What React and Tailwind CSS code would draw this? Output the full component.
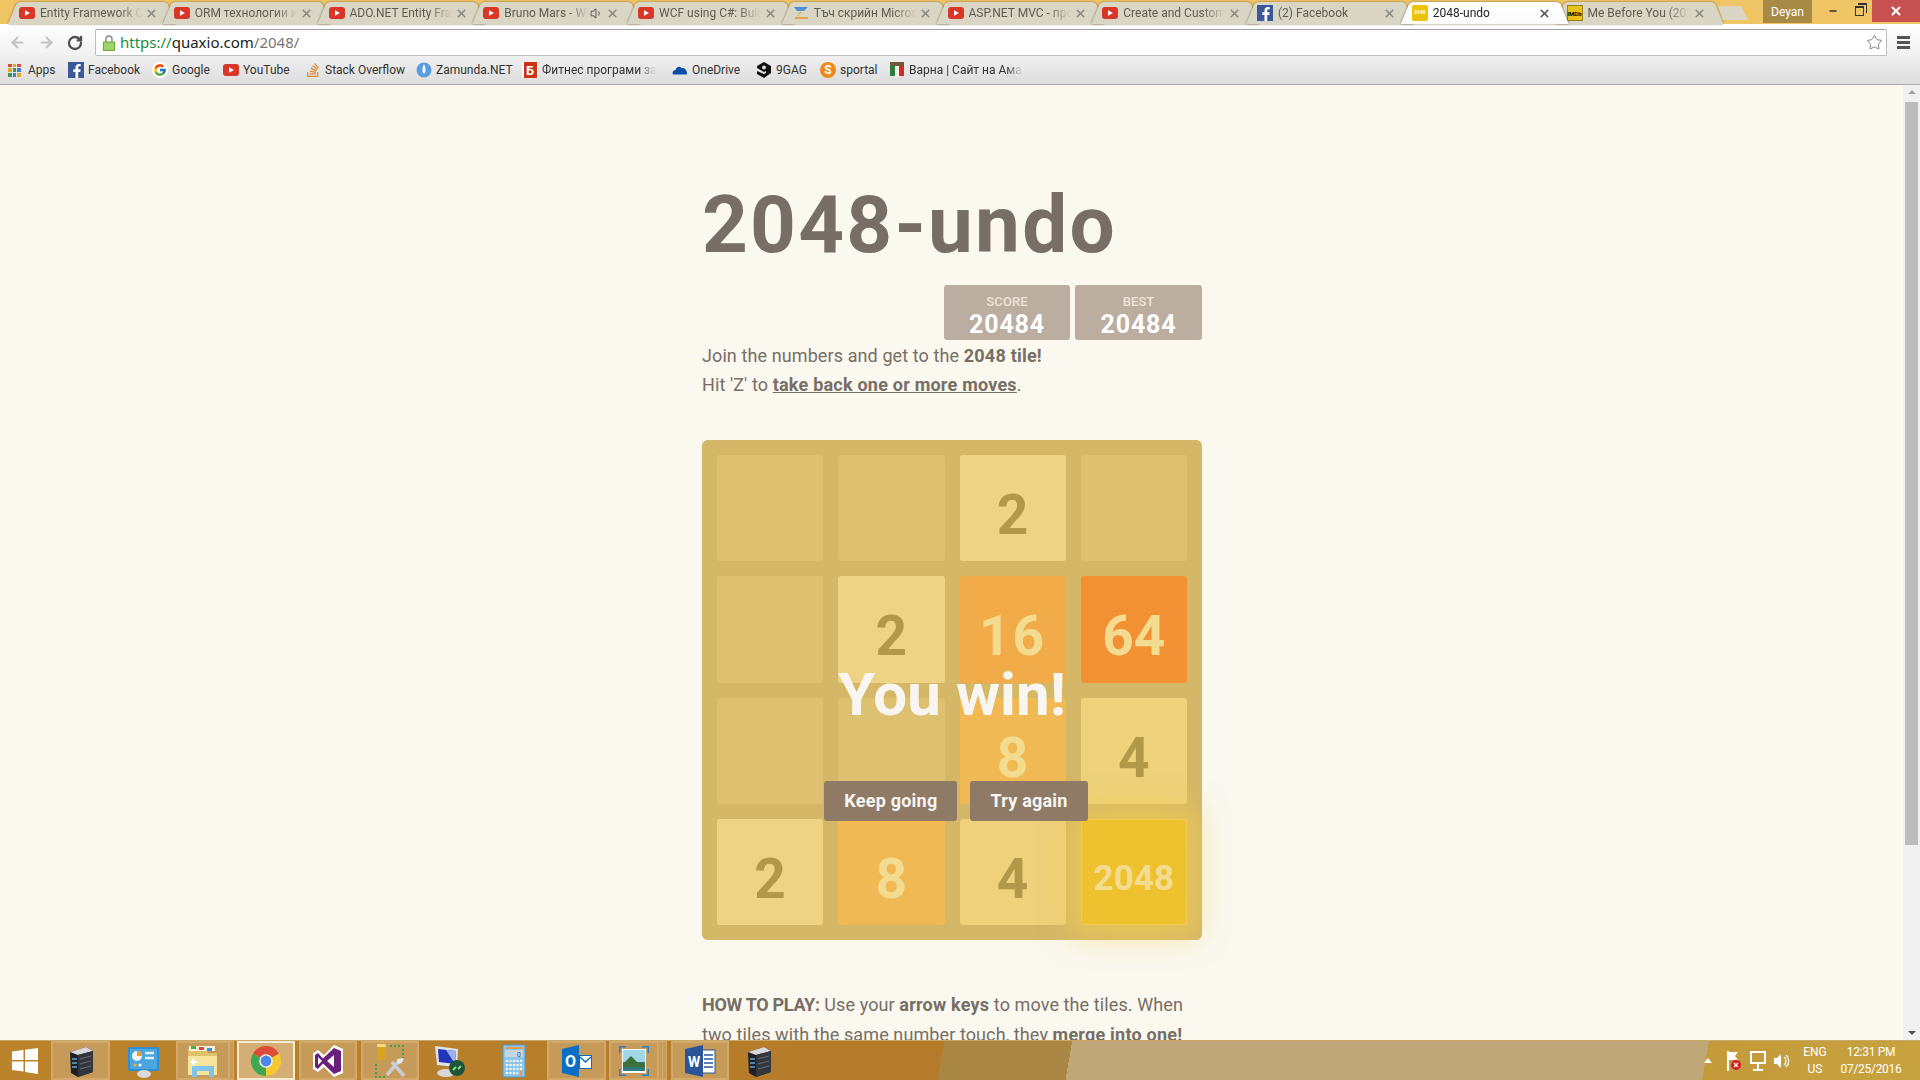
import React from "react";
import { ArrowLeft, ArrowRight, RotateCw, Star, X, Volume1, Minus } from "lucide-react";
import { FaFacebookF, FaStackOverflow } from "react-icons/fa";
import { FcGoogle } from "react-icons/fc";

const YouTube = () => (
  <svg width="16" height="16" viewBox="0 0 16 16" className="flex-none">
    <rect x="0" y="2" width="16" height="12" rx="3" fill="#d9362a" />
    <path d="M6 5.2 L11 8 L6 10.8 Z" fill="#fff" />
  </svg>
);

const Facebook = () => (
  <span className="flex h-4 w-4 flex-none items-end justify-end bg-[#3b5998] text-white">
    <FaFacebookF size={14} />
  </span>
);

const Fav2048 = () => (
  <span className="flex h-4 w-4 flex-none items-center justify-center rounded-[2px] bg-[#edc200] text-[5px] font-bold text-white">
    2048
  </span>
);

const Imdb = () => (
  <span className="flex h-4 w-4 flex-none items-center justify-center border border-[#9a7d10] bg-[#e8c21a] text-[6px] font-bold text-black">
    IMDb
  </span>
);

const Zlogo = () => (
  <svg width="16" height="16" viewBox="0 0 16 16" className="flex-none">
    <path d="M1 2 H15 L11 6 H4 Z" fill="#4b8fd6" />
    <path d="M9 7 L3 12 H15 V14 H1 L7 7 Z" fill="#e8a04a" />
  </svg>
);

const tabs = [
  { icon: <YouTube />, label: "Entity Framework Code First" },
  { icon: <YouTube />, label: "ORM технологии и Entity" },
  { icon: <YouTube />, label: "ADO.NET Entity Framework" },
  { icon: <YouTube />, label: "Bruno Mars - When I Was", sound: true },
  { icon: <YouTube />, label: "WCF using C#: Building" },
  { icon: <Zlogo />, label: "Тъч скрийн Microsoft Surface" },
  { icon: <YouTube />, label: "ASP.NET MVC - проект" },
  { icon: <YouTube />, label: "Create and Customize" },
  { icon: <Facebook />, label: "(2) Facebook" },
  { icon: <Fav2048 />, label: "2048-undo", active: true },
  { icon: <Imdb />, label: "Me Before You (2016)" },
];

const Tab = ({ icon, label, sound, active }) => (
  <div className={`relative -mr-[13.25px] h-[22px] w-[168px] flex-none drop-shadow-[0_0_1px_rgba(90,70,30,0.7)] ${active ? "z-10" : ""}`}>
    <div
      className={`flex h-full items-center pl-[11px] [clip-path:polygon(0_100%,5%_8%,7%_0,93%_0,95%_8%,100%_100%)] ${
        active ? "bg-gradient-to-b from-[#ffffff] to-[#fbfbfb]" : "bg-[#dad6c6]"
      }`}
    >
      {icon}
      <span
        className={`ml-[5px] overflow-hidden whitespace-nowrap text-[12px] [mask-image:linear-gradient(to_right,black_78%,transparent)] ${
          sound ? "w-[84px]" : "w-[102px]"
        } ${active ? "text-[#222]" : "text-[#5f5b50]"}`}
      >
        {label}
      </span>
      {sound && <Volume1 size={13} className="ml-[2px] text-[#666]" />}
      <X size={13} strokeWidth={3} className={`ml-[3px] flex-none ${active ? "text-[#555]" : "text-[#8a8a84]"}`} />
    </div>
  </div>
);

const AppsIcon = () => (
  <span className="mr-[3px] grid h-[13px] w-[13px] flex-none grid-cols-3 gap-px">
    {["#e24a3b", "#e8a52d", "#e24a3b", "#e8a52d", "#3f9b4b", "#3f7fdc", "#3f9b4b", "#3f7fdc", "#e8a52d"].map((c, i) => (
      <span key={i} style={{ background: c }} />
    ))}
  </span>
);

const bookmarks = [
  { icon: <AppsIcon />, label: "Apps", w: "w-[60px]" },
  { icon: <Facebook />, label: "Facebook", w: "w-[84px]" },
  { icon: <span className="flex h-4 w-4 flex-none items-center justify-center rounded-full bg-white"><FcGoogle size={14} /></span>, label: "Google", w: "w-[71px]" },
  { icon: <YouTube />, label: "YouTube", w: "w-[82px]" },
  { icon: <FaStackOverflow size={16} className="flex-none text-[#e08a35]" />, label: "Stack Overflow", w: "w-[111px]" },
  {
    icon: (
      <svg width="16" height="16" viewBox="0 0 16 16" className="flex-none">
        <circle cx="8" cy="8" r="7.5" fill="#5b9be0" />
        <path d="M8 2 C10 6 10 10 8 12 C6 10 6 6 8 2 Z" fill="#fff" />
      </svg>
    ),
    label: "Zamunda.NET",
    w: "w-[106px]",
  },
  {
    icon: (
      <span className="flex h-4 w-4 flex-none items-center justify-center bg-white">
        <span className="flex h-4 w-[13px] items-center justify-center bg-[#cc3311] text-[13px] font-bold leading-none text-white">Б</span>
      </span>
    ),
    label: "Фитнес програми за",
    fade: true,
    w: "w-[150px]",
  },
  {
    icon: (
      <svg width="16" height="16" viewBox="0 0 18 16" className="flex-none">
        <path d="M1 13 C0 10 2 8 4 8 C5 4 9 3 11 6 C14 5 17 8 17 13 Z" fill="#0b4fa8" />
      </svg>
    ),
    label: "OneDrive",
    w: "w-[84px]",
  },
  {
    icon: (
      <svg width="16" height="16" viewBox="0 0 16 16" className="flex-none">
        <path d="M8 0 L15 4 V11 L8 16 L1 12 V9 L8 12 L10 11 V9 L8 10 L1 6 V4 Z" fill="#111" />
        <circle cx="8" cy="5.5" r="2" fill="#ddd" />
      </svg>
    ),
    label: "9GAG",
    w: "w-[64px]",
  },
  {
    icon: (
      <span className="flex h-4 w-4 flex-none items-center justify-center rounded-full bg-[#ef8a1c] text-[12px] font-bold leading-none text-white">S</span>
    ),
    label: "sportal",
    w: "w-[69px]",
  },
  {
    icon: (
      <svg width="16" height="16" viewBox="0 0 16 16" className="flex-none">
        <rect x="1" y="0" width="14" height="4" fill="#6b5b3a" />
        <rect x="1" y="4" width="5" height="10" fill="#2c7a3d" />
        <rect x="6" y="4" width="4" height="11" fill="#f4f1e6" />
        <rect x="10" y="4" width="5" height="10" fill="#c9302c" />
      </svg>
    ),
    label: "Варна | Сайт на Аматьори",
    fade: true,
    w: "w-[140px]",
  },
];

const ServerIcon = () => (
  <svg width="30" height="34" viewBox="0 0 30 34">
    <path d="M4 8 L20 3 L27 7 L27 28 L12 33 L5 29 Z" fill="#1f2126" />
    <path d="M4 8 L20 3 L27 7 L12 11 Z" fill="#d8d8d8" />
    <path d="M12 11 L27 7 V28 L12 33 Z" fill="#33363c" />
    <path d="M6 15 H11 M6 19 H11 M6 23 H11" stroke="#5fa8d8" strokeWidth="1.3" />
    <path d="M14 15 L25 12 M14 20 L25 17 M14 25 L25 22" stroke="#6a6e76" strokeWidth="1" />
  </svg>
);

const ControlIcon = () => (
  <svg width="34" height="34" viewBox="0 0 34 34">
    <rect x="2" y="3" width="31" height="24" rx="2" fill="#2f8fd0" />
    <rect x="4" y="5" width="27" height="20" fill="#4aa6e0" />
    <circle cx="11" cy="12" r="5" fill="#f3f6f8" />
    <path d="M11 12 V7 A5 5 0 0 1 16 12 Z" fill="#ef9a2a" />
    <path d="M19 9 H28 M19 14 H28" stroke="#dcefff" strokeWidth="2.5" />
    <circle cx="9" cy="21" r="1.6" fill="#f0b030" />
    <circle cx="14" cy="21" r="1.6" fill="#f4f4f4" />
    <ellipse cx="18" cy="30" rx="7" ry="4" fill="#dadada" />
  </svg>
);

const FolderIcon = () => (
  <svg width="34" height="34" viewBox="0 0 34 34">
    <path d="M2 5 H20 L22 9 H31 V31 H2 Z" fill="#e0c26a" />
    <rect x="3" y="2" width="26" height="5" fill="#f6f0d4" />
    <rect x="5" y="2" width="5" height="3" fill="#4caf50" />
    <rect x="13" y="3" width="5" height="3" fill="#d84a3a" />
    <rect x="21" y="4" width="5" height="3" fill="#3a8fd8" />
    <path d="M2 12 H31 V31 H2 Z" fill="#f6e49c" />
    <path d="M6 33 V22 H28 V33 H23 V27 H11 V33 Z" fill="#7fc4ea" />
    <path d="M6 14 L9 17 L13 18 L9 19 L8 23 L6 19 L3 18 L6 17 Z" fill="#fff" />
  </svg>
);

const ChromeIcon = () => (
  <svg width="30" height="30" viewBox="0 0 30 30">
    <circle cx="15" cy="15" r="15" fill="#f6c92f" />
    <path d="M15 15 L2 7.5 A15 15 0 0 1 28 7.5 Z" fill="#dd4b39" />
    <path d="M15 15 L2 7.5 A15 15 0 0 0 15 30 Z" fill="#3fa652" />
    <circle cx="15" cy="15" r="6.8" fill="#f4f4f4" />
    <circle cx="15" cy="15" r="5.4" fill="#4a86e8" />
  </svg>
);

const VsIcon = () => (
  <svg width="32" height="34" viewBox="0 0 32 34">
    <path d="M22 1 L31 5 V29 L22 33 L12 23 L6 28 L1 25 V9 L6 6 L12 11 Z" fill="#fff" />
    <path d="M22 4 L29 7 V27 L22 30 L11 19.5 L6 25 L3 23 V11 L6 9 L11 14.5 Z" fill="#68217a" />
    <path d="M22 11 V23 L15 17 Z M6 13 L10 17 L6 21 Z" fill="#fff" />
  </svg>
);

const ToolsIcon = () => (
  <svg width="34" height="36" viewBox="0 0 34 36">
    <rect x="4" y="1" width="9" height="16" rx="2" fill="#d9a21f" />
    <rect x="4" y="1" width="9" height="3" rx="1" fill="#f5dc80" />
    <path d="M17 3 H30 V17 M3 21 V34 H14" stroke="#3fa34d" strokeWidth="2" strokeDasharray="2 2" fill="none" />
    <path d="M14 32 L25 19 M19 19 L31 33" stroke="#c9ccd2" strokeWidth="3.5" />
    <path d="M24 16 L31 15 L29 20 L25 21 Z" fill="#e8e8ea" />
  </svg>
);

const RdpIcon = () => (
  <svg width="36" height="36" viewBox="0 0 36 36">
    <path d="M3 3 L26 6 L25 24 L5 22 Z" fill="#dfe3ea" />
    <path d="M6 6 L24 8 L23 21 L7 19 Z" fill="#2234b8" />
    <path d="M14 7 L24 8 L23 21 Z" fill="#9db3ea" />
    <ellipse cx="14" cy="30" rx="9" ry="4" fill="#d8d8d8" />
    <circle cx="25" cy="25" r="8" fill="#20543a" />
    <path d="M21 27 L24 24 M29 23 L26 26" stroke="#7fe07f" strokeWidth="2" />
  </svg>
);

const CalcIcon = () => (
  <svg width="24" height="34" viewBox="0 0 24 34">
    <rect x="1" y="1" width="22" height="32" rx="1" fill="#8dc8ea" stroke="#4b9ad0" />
    <rect x="3" y="3" width="18" height="2" fill="#ef9a4a" />
    <rect x="3" y="6" width="18" height="7" fill="#c5d6e2" />
    <text x="19" y="12.5" textAnchor="end" fontSize="7" fill="#44566a">0</text>
    <path d="M4 17 H20 M4 21 H20 M4 25 H20 M4 29 H16" stroke="#fff" strokeWidth="2" strokeDasharray="2 1.5" />
    <rect x="18" y="26" width="2" height="6" fill="#ef9a4a" />
  </svg>
);

const OutlookIcon = () => (
  <svg width="32" height="34" viewBox="0 0 32 34">
    <path d="M18 1 V33 L1 29 V5 Z" fill="#0a6fc4" />
    <text x="9.5" y="23" textAnchor="middle" fontSize="16" fontWeight="700" fill="#fff">O</text>
    <rect x="18" y="11" width="13" height="14" fill="#0a6fc4" />
    <rect x="19" y="12" width="11" height="12" fill="#fff" />
    <path d="M19 13 L24.5 18 L30 13" stroke="#0a6fc4" strokeWidth="1.5" fill="none" />
  </svg>
);

const PhotoIcon = () => (
  <svg width="30" height="30" viewBox="0 0 30 30">
    <path d="M0 7 V0 H7 M23 0 H30 V7 M30 23 V30 H23 M7 30 H0 V23" stroke="#2b7fc4" strokeWidth="3" fill="none" />
    <rect x="3" y="3" width="24" height="24" fill="#fff" />
    <rect x="4" y="4" width="22" height="12" fill="#9fd6e8" />
    <rect x="4" y="16" width="22" height="9" fill="#2f7a7a" />
    <path d="M4 18 L12 10 L18 16 L26 18 V21 H4 Z" fill="#3c6f3a" />
  </svg>
);

const WordIcon = () => (
  <svg width="32" height="34" viewBox="0 0 32 34">
    <rect x="17" y="6" width="14" height="23" fill="#fff" stroke="#2a5699" />
    <path d="M20 11 H29 M20 15 H29 M20 19 H29 M20 23 H29" stroke="#2a5699" strokeWidth="1.5" />
    <path d="M19 1 V33 L1 29 V5 Z" fill="#2a5699" />
    <text x="10" y="23" textAnchor="middle" fontSize="14" fontWeight="700" fill="#fff">W</text>
  </svg>
);

const taskItems = [
  { w: "w-[59px] ml-[4px]", icon: <ServerIcon />, on: true },
  { w: "w-[66px]", icon: <ControlIcon /> },
  { w: "w-[54px]", icon: <FolderIcon />, on: true, stack: 1 },
  { w: "w-[58px] ml-[3px]", icon: <ChromeIcon />, active: true },
  { w: "w-[58px] ml-[4px]", icon: <VsIcon />, on: true },
  { w: "w-[58px] ml-[4px]", icon: <ToolsIcon />, on: true },
  { w: "w-[62px]", icon: <RdpIcon /> },
  { w: "w-[66px]", icon: <CalcIcon /> },
  { w: "w-[59px]", icon: <OutlookIcon />, on: true },
  { w: "w-[50px] ml-[3px]", icon: <PhotoIcon />, on: true, stack: 2 },
  { w: "w-[58px] ml-[4px]", icon: <WordIcon />, on: true },
  { w: "w-[58px] ml-[1px]", icon: <ServerIcon /> },
];

const TaskItem = ({ w, icon, on, active, stack }) => (
  <>
    <div
      className={`flex h-[39px] flex-none items-center justify-center ${w} ${
        active
          ? "border-2 border-[#f5ead2] bg-[#d4ae74]"
          : on
            ? "border-2 border-[#d3a868] bg-[#c69a58]"
            : ""
      }`}
    >
      {icon}
    </div>
    {stack >= 1 && <div className="h-[39px] w-[4px] flex-none border border-l-0 border-[#d3a868] bg-[#c69a58]" />}
    {stack >= 2 && <div className="h-[39px] w-[4px] flex-none border border-l-0 border-[#d3a868] bg-[#c69a58]" />}
  </>
);

const grid = [
  [0, 0, 2, 0],
  [0, 2, 16, 64],
  [0, 0, 8, 4],
  [2, 8, 4, 2048],
];

const tileStyles = {
  0: "bg-[#cdc1b4]",
  2: "bg-[#eee4da] text-[#776e65] text-[55px]",
  4: "bg-[#ede0c8] text-[#776e65] text-[55px]",
  8: "bg-[#f2b179] text-[#f9f6f2] text-[55px]",
  16: "bg-[#f59563] text-[#f9f6f2] text-[55px] tracking-[2px]",
  64: "bg-[#f65e3b] text-[#f9f6f2] text-[55px]",
  2048: "bg-[#edc22e] text-[#f9f6f2] text-[35px] shadow-[0_0_30px_10px_rgba(243,215,116,0.75),inset_0_0_0_1px_rgba(255,255,255,0.286)] z-[1]",
};

export default function App() {
  return (
    <div className="flex h-screen w-full flex-col overflow-hidden bg-[#faf8ef] font-['Roboto',sans-serif]">
      {/* tab strip */}
      <div className="flex h-6 flex-none items-end bg-[#f0c566] pl-2">
        {tabs.map((t) => (
          <Tab key={t.label} {...t} />
        ))}
        <div className="mb-1 ml-2 h-[14px] w-[30px] flex-none bg-[#dad6c6] drop-shadow-[0_0_1px_rgba(90,70,30,0.7)] [clip-path:polygon(0_0,75%_0,100%_100%,15%_100%)]" />
        <div className="mb-auto ml-auto flex flex-none items-start">
          <div className="flex h-[23px] w-[49px] items-center justify-center bg-[#a88a47] text-[12px] text-white">Deyan</div>
          <div className="flex h-[22px] w-[30px] items-center justify-center pl-[12px] text-[#333]">
            <Minus size={10} strokeWidth={4} />
          </div>
          <div className="flex h-[22px] w-[30px] items-center justify-center pl-[4px]">
            <span className="relative h-[10px] w-[9px] border border-t-2 border-[#333]">
              <span className="absolute -right-[4px] -top-[5px] h-[10px] w-[9px] border border-t-2 border-b-0 border-l-0 border-[#333]" />
            </span>
          </div>
          <div className="flex h-[22px] w-[48px] items-center justify-center bg-[#c75050] text-white">
            <X size={14} strokeWidth={3.5} />
          </div>
        </div>
      </div>

      {/* toolbar */}
      <div className="flex h-8 flex-none items-start bg-gradient-to-b from-[#ffffff] to-[#f1f1f1] pt-[5px]">
        <div className="flex w-[95px] flex-none items-center pl-[9px] pt-[5px]">
          <ArrowLeft size={17} strokeWidth={3} className="text-[#c4c4c4]" />
          <ArrowRight size={17} strokeWidth={3} className="ml-3 text-[#c4c4c4]" />
          <RotateCw size={16} strokeWidth={3.5} className="ml-3 text-[#505050]" />
        </div>
        <div className="flex h-[27px] w-[1792px] flex-none items-center rounded-[2px] border border-[#bdbdbd] border-t-[#a2a2a2] bg-white">
          <svg width="12" height="16" viewBox="0 0 12 16" className="ml-[7px] flex-none">
            <path d="M3 7 V4 A3 3 0 0 1 9 4 V7" fill="none" stroke="#8a8a8a" strokeWidth="1.5" />
            <rect x="0.5" y="7" width="11" height="8.5" fill="#9ed36a" stroke="#6da83e" />
          </svg>
          <span className="ml-[5px] font-['Noto_Sans',sans-serif] text-[15px] text-[#222]">
            <span className="text-[#1a8f3c]">https://</span>quaxio.com<span className="text-[#777]">/2048/</span>
          </span>
          <Star size={17} strokeWidth={1.3} className="ml-auto mr-[3px] text-[#777]" />
        </div>
        <div className="ml-[10px] flex flex-col gap-[2px] pt-[7px]">
          <span className="h-[3px] w-[13px] bg-[#555]" />
          <span className="h-[3px] w-[13px] bg-[#555]" />
          <span className="h-[3px] w-[13px] bg-[#555]" />
        </div>
      </div>

      {/* bookmarks */}
      <div className="flex h-[29px] flex-none items-center border-b border-[#a9a9a9] bg-gradient-to-b from-[#f0f0f0] to-[#dddddd] pl-2 text-[12px] text-[#333]">
        {bookmarks.map((b) => (
          <div key={b.label} className={`flex flex-none items-center gap-1 ${b.w}`}>
            {b.icon}
            <span
              className={`whitespace-nowrap ${
                b.fade ? "w-[114px] overflow-hidden [mask-image:linear-gradient(to_right,black_85%,transparent)]" : ""
              }`}
            >
              {b.label}
            </span>
          </div>
        ))}
      </div>

      {/* page */}
      <div className="flex min-h-0 flex-1">
        <div className="min-w-0 flex-1 overflow-hidden pl-px">
          <div className="mx-auto w-[500px] text-[18px] leading-[30px] tracking-[0.1px] text-[#776e65]">
            <h1 className="mt-[100px] text-[80px] font-bold leading-[80px] tracking-[2.2px]">2048-undo</h1>
            <div className="mt-5 flex justify-end gap-[5px] text-center font-bold">
              <div className="h-[55px] w-[126px] rounded-[3px] bg-[#bbada0] pt-[10px]">
                <div className="text-[13px] font-medium leading-[14px] text-[#eee4da]">SCORE</div>
                <div className="text-[25px] leading-[32px] tracking-[0.9px] text-white">20484</div>
              </div>
              <div className="h-[55px] w-[127px] rounded-[3px] bg-[#bbada0] pt-[10px]">
                <div className="text-[13px] font-medium leading-[14px] text-[#eee4da]">BEST</div>
                <div className="text-[25px] leading-[32px] tracking-[0.9px] text-white">20484</div>
              </div>
            </div>
            <p className="pt-px">
              Join the numbers and get to the <b className="tracking-[0.22px]">2048 tile!</b>
            </p>
            <p className="-mt-px">
              Hit 'Z' to <b className="tracking-[0.22px] underline">take back one or more moves</b>.
            </p>

            <div className="relative mt-10 h-[500px] rounded-[6px] bg-[#bbada0] p-[15px]">
              <div className="grid grid-cols-4 gap-[15px]">
                {grid.flat().map((v, i) => (
                  <div
                    key={i}
                    className={`relative h-[106.25px] rounded-[3px] text-center font-bold leading-[120px] ${tileStyles[v]}`}
                  >
                    {v > 0 ? v : ""}
                  </div>
                ))}
              </div>
              <div className="absolute inset-0 z-[2] flex flex-col items-center rounded-[6px] bg-[#edc22e]/50">
                <p className="mt-[225px] text-[60px] font-bold leading-[60px] text-[#f9f6f2]">You win!</p>
                <div className="mt-[56px] flex gap-[13px] pl-2 text-[18px] font-bold leading-[40px] tracking-[0.22px] text-[#f9f6f2]">
                  <span className="h-10 rounded-[3px] bg-[#8f7a66] px-5">Keep going</span>
                  <span className="h-10 rounded-[3px] bg-[#8f7a66] px-5">Try again</span>
                </div>
              </div>
            </div>

            <p className="mt-[50px]">
              <b className="tracking-[-0.3px]">HOW TO PLAY:</b> Use your <b className="tracking-[0.22px]">arrow keys</b> to move the tiles. When two tiles with the same number
              touch, they <b className="tracking-[0.22px]">merge into one!</b>
            </p>
          </div>
        </div>
        <div className="flex w-[17px] flex-none flex-col items-center bg-[#f1f1f1] pt-[5px] pb-[5px]">
          <span className="h-0 w-0 border-x-[4px] border-b-[4px] border-x-transparent border-b-[#a3a3a3]" />
          <span className="mt-[8px] h-[743px] w-[13px] bg-[#bcbcbc]" />
          <span className="mt-auto h-0 w-0 border-x-[4px] border-t-[4px] border-x-transparent border-t-[#505050]" />
        </div>
      </div>

      {/* taskbar */}
      <div className="flex h-10 flex-none items-center border-t border-[#c9a868] bg-[linear-gradient(100deg,#bb842b_0%,#b57a2a_930px,#a98644_930px,#a98644_1056px,#bfa778_1056px,#bfa778_1683px,#c49a3a_1683px,#c8a23f_100%)]">
        <svg width="28" height="28" viewBox="0 0 28 28" className="ml-[11px] mr-[8px] flex-none">
          <path d="M1 4.5 L12.5 3 V13 H1 Z M14 2.7 L27 1 V13 H14 Z M1 14.5 H12.5 V24.5 L1 23 Z M14 14.5 H27 V27 L14 25 Z" fill="#fff" />
        </svg>
        {taskItems.map((t, i) => (
          <TaskItem key={i} {...t} />
        ))}
        <div className="ml-auto flex flex-none items-center text-[12px] text-white">
          <span className="mr-[13px] h-0 w-0 border-x-[4px] border-b-[5px] border-x-transparent border-b-white" />
          <svg width="18" height="24" viewBox="0 0 18 24" className="mr-[6px]">
            <path d="M3 2 V22" stroke="#fff" strokeWidth="2" />
            <path d="M4 3 H13 L10 7 L13 11 H4 Z" fill="#fff" />
            <circle cx="11" cy="16" r="5" fill="#d12020" />
            <path d="M9 14 L13 18 M13 14 L9 18" stroke="#fff" strokeWidth="1.3" />
          </svg>
          <svg width="18" height="22" viewBox="0 0 18 22" className="mr-[6px]">
            <rect x="2" y="2" width="14" height="11" fill="none" stroke="#fff" strokeWidth="2" />
            <path d="M9 13 V19 M4 20 H14" stroke="#fff" strokeWidth="2" />
          </svg>
          <svg width="18" height="20" viewBox="0 0 18 20" className="mr-[9px]">
            <path d="M1 7 H4 L8 3 V17 L4 13 H1 Z" fill="#fff" />
            <path d="M11 6 A5 5 0 0 1 11 14 M13 4 A8 8 0 0 1 13 16" stroke="#fff" strokeWidth="1.2" fill="none" />
          </svg>
          <div className="w-[30px] text-center leading-[17px]">
            <div>ENG</div>
            <div>US</div>
          </div>
          <div className="ml-[10px] mr-[18px] w-[62px] text-center leading-[17px] tracking-[-0.3px]">
            <div>12:31 PM</div>
            <div>07/25/2016</div>
          </div>
        </div>
      </div>
    </div>
  );
}
